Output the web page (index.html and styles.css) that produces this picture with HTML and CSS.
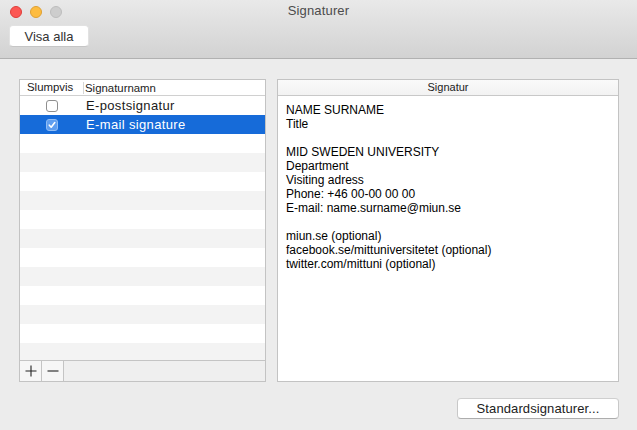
FILE: index.html
```html
<!DOCTYPE html>
<html>
<head>
<meta charset="utf-8">
<link rel="stylesheet" href="styles.css">
</head>
<body>
<div class="window">
  <header class="toolbar">
    <div class="titlebar">
      <div class="lights">
        <span class="light red"></span>
        <span class="light yellow"></span>
        <span class="light gray"></span>
      </div>
      <div class="title">Signaturer</div>
    </div>
    <button class="btn visa">Visa alla</button>
  </header>
  <main class="content">
    <div class="panes">
      <div class="table">
        <div class="thead">
          <div class="th col1">Slumpvis</div>
          <div class="th col2">Signaturnamn</div>
        </div>
        <div class="tbody">
          <div class="row"><div class="col1"><span class="cb"></span></div><div class="col2 name">E-postsignatur</div></div>
          <div class="row sel"><div class="col1"><span class="cb on"><svg viewBox="0 0 10 10" width="10" height="10"><path d="M2.3 5.2 L4.2 7.2 L7.8 2.6" fill="none" stroke="#fff" stroke-width="1.6" stroke-linecap="round" stroke-linejoin="round"/></svg></span></div><div class="col2 name">E-mail signature</div></div>
          <div class="row"></div>
          <div class="row"></div>
          <div class="row"></div>
          <div class="row"></div>
          <div class="row"></div>
          <div class="row"></div>
          <div class="row"></div>
          <div class="row"></div>
          <div class="row"></div>
          <div class="row"></div>
          <div class="row"></div>
          <div class="row"></div>
        </div>
        <div class="tfoot">
          <button class="sq"><svg viewBox="0 0 12 12" width="12" height="12"><path d="M6 0.5 V11.5 M0.5 6 H11.5" stroke="#222" stroke-width="1.1"/></svg></button>
          <button class="sq"><svg viewBox="0 0 12 12" width="12" height="12"><path d="M0.5 6 H11.5" stroke="#222" stroke-width="1.1"/></svg></button>
        </div>
      </div>
      <div class="sigpanel">
        <div class="sighead">Signatur</div>
        <div class="sigbody">
          <p>NAME SURNAME<br>Title</p>
          <p>MID SWEDEN UNIVERSITY<br>Department<br>Visiting adress<br>Phone: +46 00-00 00 00<br>E-mail: name.surname@miun.se</p>
          <p>miun.se (optional)<br>facebook.se/mittuniversitetet (optional)<br>twitter.com/mittuni (optional)</p>
        </div>
      </div>
    </div>
    <div class="actions">
      <button class="btn std">Standardsignaturer...</button>
    </div>
  </main>
</div>
</body>
</html>
```

FILE: styles.css
```css
* { box-sizing: border-box; }
html, body { margin: 0; padding: 0; }
body {
  width: 637px;
  height: 430px;
  background: #ececec;
  font-family: "Liberation Sans", Arial, sans-serif;
  color: #1a1a1a;
  overflow: hidden;
}
.window { width: 637px; height: 430px; display: flex; flex-direction: column; }

.toolbar {
  height: 59px;
  background: linear-gradient(#e9e9e9, #d2d2d2);
  border-bottom: 1px solid #b1b1b1;
  padding: 0 9px;
  display: flex;
  flex-direction: column;
}
.titlebar { height: 22px; display: flex; align-items: center; position: relative; }
.lights { display: flex; gap: 8px; padding-left: 1px; padding-top: 1px; }
.light { width: 12px; height: 12px; border-radius: 50%; display: block; }
.light.red { background: #fc5753; border: 1px solid #df3d39; }
.light.yellow { background: #fdbc40; border: 1px solid #dea033; }
.light.gray { background: #cdcdcd; border: 1px solid #bdbdbd; }
.title {
  position: absolute; left: 0; right: 0; top: 3px;
  text-align: center; font-size: 13px; color: #4c4c4c;
  letter-spacing: 0.15px;
}
.btn {
  font-family: "Liberation Sans", Arial, sans-serif;
  background: #fff;
  border: 1px solid #c8c8c8;
  border-top-color: #cfcfcf;
  border-bottom-color: #adadad;
  border-radius: 4px;
  color: #222;
  padding: 0;
  font-size: 13px;
}
.visa {
  margin-top: 3px;
  width: 80px; height: 22px;
  border-color: #e2e2e2; border-bottom-color: #c6c6c6;
  color: #333;
}

.content { flex: 1; padding: 20px 18px 0 19px; display: flex; flex-direction: column; }
.panes { display: flex; gap: 11px; height: 303px; }

.table {
  width: 247px;
  border: 1px solid #c3c3c3;
  background: #fff;
  display: flex; flex-direction: column;
}
.thead {
  height: 16px; display: flex;
  border-bottom: 1px solid #d0d0d0;
  font-size: 11.4px; color: #222;
  flex-shrink: 0;
}
.th { line-height: 15px; }
.col1 { width: 63px; flex-shrink: 0; display: flex; justify-content: center; align-items: center; }
.col2 { flex: 1; padding-left: 2px; }
.thead .col2 { border-left: 1px solid #d6d6d6; margin: 2px 0 1px; line-height: 12px; padding-left: 1px; }
.thead .col1 { justify-content: flex-start; padding-left: 7px; }
.tbody { flex: 1; overflow: hidden; }
.row { height: 19px; display: flex; align-items: center; }
.row:nth-child(even) { background: #f3f3f3; }
.row.sel { background: #166bd9; color: #fff; }
.name { font-size: 13px; padding-left: 3px; letter-spacing: 0.35px; }
.cb {
  width: 12px; height: 12px; border-radius: 3px;
  border: 1px solid #8f8f8f; background: #fff; display: block;
  margin-left: 1px;
}
.cb.on { background: #5f9ef0; border-color: #8fbcf4; display: flex; align-items: center; justify-content: center; }
.cb svg { display: block; }
.tfoot {
  height: 21px; border-top: 1px solid #c4c4c4;
  background: #efefef; display: flex; flex-shrink: 0;
}
.sq {
  width: 22px; height: 20px; padding: 0; margin: 0;
  border: 0; border-right: 1px solid #c4c4c4;
  background: #f6f6f6;
  display: flex; align-items: center; justify-content: center;
}

.sigpanel {
  width: 342px;
  border: 1px solid #c3c3c3;
  background: #fff;
  display: flex; flex-direction: column;
}
.sighead {
  height: 16px; border-bottom: 1px solid #c8c8c8;
  background: linear-gradient(#fafafa, #f2f2f2);
  text-align: center; font-size: 11px; line-height: 15px; color: #222;
}
.sigbody { padding: 7px 8px; font-size: 12px; line-height: 14px; color: #000; }
.sigbody p { margin: 0 0 14px; }

.actions { display: flex; justify-content: flex-end; padding-top: 16px; }
.std { width: 162px; height: 21px; margin-right: 0; letter-spacing: 0.1px; }
```
